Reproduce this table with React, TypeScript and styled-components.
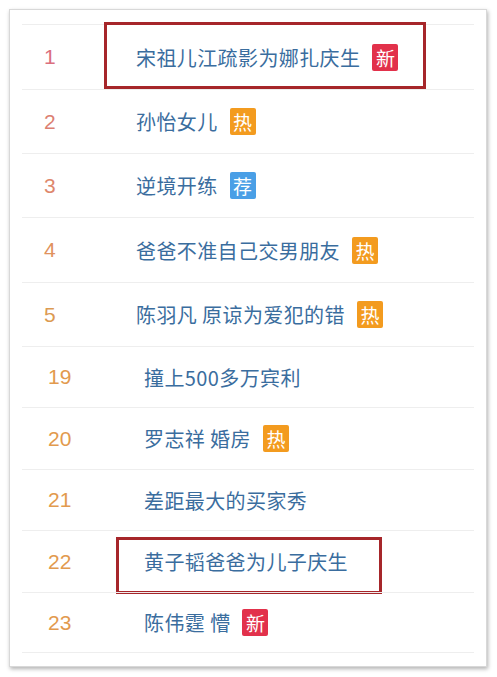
import React from 'react';
import styled, {createGlobalStyle} from 'styled-components';

type Tag = 'new' | 'hot' | 'rec';

interface HotItem {
    rank: number,
    title: string,
    tag?: Tag,
    height: number,
    box?: {top: number, left: number, width: number, height: number};
}

const items: HotItem[] = [
    {rank: 1, title: '宋祖儿江疏影为娜扎庆生', tag: 'new', height: 65, box: {top: -3, left: 82, width: 322, height: 67}},
    {rank: 2, title: '孙怡女儿', tag: 'hot', height: 64},
    {rank: 3, title: '逆境开练', tag: 'rec', height: 64},
    {rank: 4, title: '爸爸不准自己交男朋友', tag: 'hot', height: 65},
    {rank: 5, title: '陈羽凡 原谅为爱犯的错', tag: 'hot', height: 64},
    {rank: 19, title: '撞上500多万宾利', height: 61},
    {rank: 20, title: '罗志祥 婚房', tag: 'hot', height: 62},
    {rank: 21, title: '差距最大的买家秀', height: 61},
    {rank: 22, title: '黄子韬爸爸为儿子庆生', height: 62, box: {top: 6, left: 94, width: 266, height: 57}},
    {rank: 23, title: '陈伟霆 懵', tag: 'new', height: 60},
];

const tagText: Record<Tag, string> = {new: '新', hot: '热', rec: '荐'};
const tagColor: Record<Tag, string> = {new: '#e2314b', hot: '#f39b1f', rec: '#4a9fe6'};
const rankColors = ['#db6f7e', '#dc7f72', '#de876c', '#e0925e', '#dc9a52'];

const GlobalStyle = createGlobalStyle`
    html, body {
        margin: 0;
        padding: 0;
        background: #fff;
    }
    body {
        font-family: "Noto Sans CJK SC", "Liberation Sans", sans-serif;
    }`;

const Page = styled.div`
    padding: 9px 10px 10px 9px;`;

const Card = styled.div`
    width: 478px;
    height: 658px;
    box-sizing: border-box;
    background: #fff;
    border: 1px solid #d8d8d8;
    box-shadow: 1px 2px 4px rgba(0, 0, 0, 0.3);
    padding: 14px 12px 0 12px;`;

const List = styled.ul`
    list-style: none;
    margin: 0;
    padding: 0;
    border-bottom: 1px solid #eeeeee;`;

const Row = styled.li<{$h: number}>`
    position: relative;
    height: ${p => p.$h}px;
    box-sizing: border-box;
    border-top: 1px solid #eeeeee;
    display: flex;
    align-items: center;`;

const Rank = styled.span<{$wide: boolean, $color: string}>`
    width: ${p => p.$wide ? 122 : 114}px;
    padding-left: ${p => p.$wide ? 26 : 22}px;
    box-sizing: border-box;
    font-family: "Liberation Sans", sans-serif;
    font-size: 21px;
    color: ${p => p.$color};`;

const Title = styled.a`
    font-size: 20px;
    letter-spacing: 0.4px;
    color: #3a6d9e;
    text-decoration: none;`;

const Badge = styled.span<{$bg: string}>`
    margin-left: 12px;
    width: 26px;
    height: 27px;
    border-radius: 2px;
    background: ${p => p.$bg};
    color: #fff;
    font-size: 19px;
    line-height: 27px;
    text-align: center;`;

const Highlight = styled.div`
    position: absolute;
    border: 3px solid #a6262a;
    box-sizing: border-box;
    pointer-events: none;`;

export default function App() {
    return (<Page>
        <GlobalStyle />
        <Card>
            <List>
                {items.map(item => (
                    <Row key={item.rank} $h={item.height}>
                        <Rank $wide={item.rank > 9}
                              $color={item.rank <= 5 ? rankColors[item.rank - 1] : '#e29a4e'}>
                            {item.rank}
                        </Rank>
                        <Title href="#">{item.title}</Title>
                        {item.tag && <Badge $bg={tagColor[item.tag]}>{tagText[item.tag]}</Badge>}
                        {item.box && <Highlight style={{
                            top: item.box.top, left: item.box.left,
                            width: item.box.width, height: item.box.height
                        }} />}
                    </Row>
                ))}
            </List>
        </Card>
    </Page>);
}
